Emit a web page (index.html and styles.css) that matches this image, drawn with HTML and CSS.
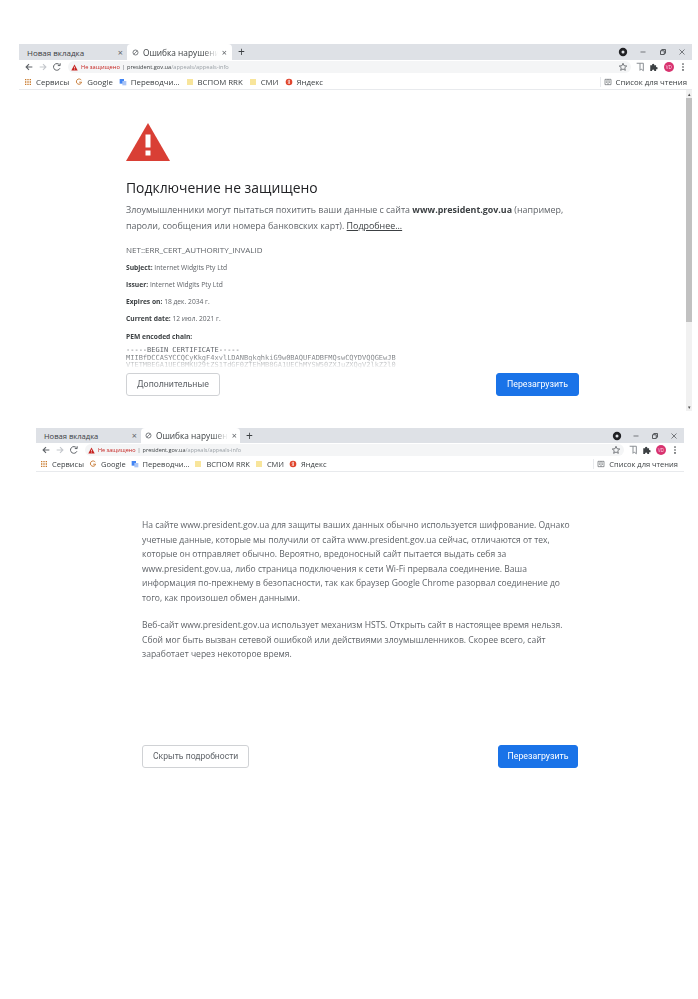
FILE: index.html
```html
<!DOCTYPE html>
<html lang="ru">

<head>
	<meta charset="utf-8">
	<title>Ошибка нарушения конфиденциальности</title>
	<link rel="stylesheet" href="styles.css">
</head>

<body>
	<svg class="defs" width="0" height="0">
		<symbol id="i-back" viewBox="0 0 12 12"><path d="M10 6H2.500M6 2.500 2.500 6 6 9.500" fill="none" stroke="currentColor" stroke-width="1.300"/></symbol>
		<symbol id="i-forward" viewBox="0 0 12 12"><path d="M2 6h7.500M6 2.500 9.500 6 6 9.500" fill="none" stroke="currentColor" stroke-width="1.300"/></symbol>
		<symbol id="i-reload" viewBox="0 0 12 12"><path d="M9.500 7.500A4 4 0 1 1 9 3.500M9.800 1.500v2.800H7" fill="none" stroke="currentColor" stroke-width="1.200"/></symbol>
		<symbol id="i-warn" viewBox="0 0 12 12"><path d="M6 1 11.500 11H.5z" fill="#c5221f"/><path d="M5.400 4.500h1.200v3.200H5.400zM5.400 8.400h1.200v1.200H5.400z" fill="#fff"/></symbol>
		<symbol id="i-globe" viewBox="0 0 12 12"><circle cx="6" cy="6" r="4.300" fill="none" stroke="#5f6368" stroke-width="1.400"/><path d="M3 9 9 3" stroke="#5f6368" stroke-width="1.200"/></symbol>
		<symbol id="i-star" viewBox="0 0 12 12"><path d="m6 1.500 1.300 3 3.200.3-2.400 2.100.7 3.100L6 8.400l-2.800 1.600.7-3.100L1.500 4.800l3.200-.3z" fill="none" stroke="#5f6368" stroke-width="1"/></symbol>
		<symbol id="i-save" viewBox="0 0 12 12"><path d="M2 1.500h8v9L7.500 8.500 6 10V1.500" fill="none" stroke="#80868b" stroke-width="1.100"/></symbol>
		<symbol id="i-puzzle" viewBox="0 0 12 12"><path d="M1.500 4h2.300a1.300 1.300 0 1 1 2.400 0h2.300v2.200a1.300 1.300 0 1 1 0 2.400v2.200H6.200a1.300 1.300 0 1 0-2.400 0H1.500z" fill="#3c4043"/></symbol>
		<symbol id="i-dots" viewBox="0 0 12 12"><circle cx="6" cy="2.500" r="1" fill="#3c4043"/><circle cx="6" cy="6" r="1" fill="#3c4043"/><circle cx="6" cy="9.500" r="1" fill="#3c4043"/></symbol>
		<symbol id="i-apps" viewBox="0 0 12 12"><path d="M1.500 1.500h2v2h-2zM5 1.500h2v2H5zM8.500 1.500h2v2h-2zM1.500 5h2v2h-2zM5 5h2v2H5zM8.500 5h2v2h-2zM1.500 8.500h2v2h-2zM5 8.500h2v2H5zM8.500 8.500h2v2h-2z" fill="#c8792b"/></symbol>
		<symbol id="i-google" viewBox="0 0 12 12"><path d="M9.500 3.300A4 4 0 1 0 10 6.300H6.300" fill="none" stroke="#c9803f" stroke-width="1.500"/></symbol>
		<symbol id="i-translate" viewBox="0 0 12 12"><path d="M1 1.500h6.500v7H1z" fill="#4285f4"/><path d="M5 4.500h6v6.500H5z" fill="#a9c4f5"/></symbol>
		<symbol id="i-folder" viewBox="0 0 12 12"><path d="M1.500 1.500h9v9h-9z" fill="#f8e59b"/></symbol>
		<symbol id="i-yandex" viewBox="0 0 12 12"><circle cx="6" cy="6" r="5" fill="#e0442c"/><path d="M6.700 3v6M6.700 6.300H5.800L4.600 9M6.700 3.200H5.900C4 3.200 4 6 5.800 6.200" fill="none" stroke="#fff" stroke-width=".9"/></symbol>
		<symbol id="i-list" viewBox="0 0 12 12"><path d="M1.500 2h9v8h-9zM6 2v8M3 4.500h1.500M3 6.500h1.500M7.500 4.500H9M7.500 6.500H9" fill="none" stroke="#5f6368" stroke-width="1"/></symbol>
		<symbol id="i-account" viewBox="0 0 12 12"><circle cx="6" cy="6" r="5" fill="#202124"/><circle cx="6" cy="6" r="1.800" fill="#dee1e6"/></symbol>
		<symbol id="i-min" viewBox="0 0 12 12"><path d="M3 6h6" stroke="#5f6368" stroke-width="1"/></symbol>
		<symbol id="i-max" viewBox="0 0 12 12"><path d="M3 4.500h4.500V9H3zM4.500 4.500V3H9v4.500H7.500" fill="none" stroke="#3c4043" stroke-width="1"/></symbol>
		<symbol id="i-close" viewBox="0 0 12 12"><path d="m3 3 6 6M9 3 3 9" stroke="#5f6368" stroke-width="1"/></symbol>
		<symbol id="i-triangle" viewBox="0 0 44 38"><path d="M22 0 44 38H0z" fill="#d93f35"/><path d="M19.500 11.500h5v13h-5zM19.500 27.500h5v5h-5z" fill="#fff"/></symbol>
	</svg>

	<section class="window window-first">
		<div class="tabstrip">
			<div class="tab">
				<span class="tab-title">Новая вкладка</span>
				<span class="tab-x">×</span>
			</div>
			<div class="tab tab-active">
				<svg class="ico"><use href="#i-globe"/></svg>
				<span class="tab-title">Ошибка нарушения</span>
				<span class="tab-x">×</span>
			</div>
			<span class="tab-plus">+</span>
			<div class="controls">
				<svg class="ico account"><use href="#i-account"/></svg>
				<svg class="ico"><use href="#i-min"/></svg>
				<svg class="ico"><use href="#i-max"/></svg>
				<svg class="ico"><use href="#i-close"/></svg>
			</div>
		</div>
		<div class="toolbar">
			<svg class="ico nav"><use href="#i-back"/></svg>
			<svg class="ico nav nav-off"><use href="#i-forward"/></svg>
			<svg class="ico nav"><use href="#i-reload"/></svg>
			<div class="omnibox">
				<svg class="ico warn"><use href="#i-warn"/></svg>
				<span class="insecure">Не защищено</span>
				<span class="pipe">|</span>
				<span class="host">president.gov.ua</span><span class="path">/appeals/appeals-info</span>
				<svg class="ico star"><use href="#i-star"/></svg>
			</div>
			<div class="tools">
				<svg class="ico"><use href="#i-save"/></svg>
				<svg class="ico"><use href="#i-puzzle"/></svg>
				<span class="avatar">VD</span>
				<svg class="ico"><use href="#i-dots"/></svg>
			</div>
		</div>
		<div class="bookmarks">
			<span class="mark"><svg class="ico"><use href="#i-apps"/></svg>Сервисы</span>
			<span class="mark"><svg class="ico"><use href="#i-google"/></svg>Google</span>
			<span class="mark"><svg class="ico"><use href="#i-translate"/></svg>Переводчи...</span>
			<span class="mark"><svg class="ico"><use href="#i-folder"/></svg>ВСПОМ RRK</span>
			<span class="mark"><svg class="ico"><use href="#i-folder"/></svg>СМИ</span>
			<span class="mark"><svg class="ico"><use href="#i-yandex"/></svg>Яндекс</span>
			<span class="mark mark-list"><svg class="ico"><use href="#i-list"/></svg>Список для чтения</span>
		</div>
		<div class="viewport">
			<main class="page page-first">
				<svg class="triangle"><use href="#i-triangle"/></svg>
				<h1>Подключение не защищено</h1>
				<p class="lead">Злоумышленники могут пытаться похитить ваши данные с сайта <b>www.president.gov.ua</b> (например, пароли, сообщения или номера банковских карт). <u>Подробнее...</u></p>
				<p class="code">NET::ERR_CERT_AUTHORITY_INVALID</p>
				<p class="fact"><b>Subject:</b> Internet Widgits Pty Ltd</p>
				<p class="fact"><b>Issuer:</b> Internet Widgits Pty Ltd</p>
				<p class="fact"><b>Expires on:</b> 18 дек. 2034 г.</p>
				<p class="fact"><b>Current date:</b> 12 июл. 2021 г.</p>
				<p class="fact fact-pem"><b>PEM encoded chain:</b></p>
				<pre class="cert">-----BEGIN CERTIFICATE-----
MIIBfDCCASYCCQCyKkgF4xvlLDANBgkqhkiG9w0BAQUFADBFMQswCQYDVQQGEwJB
VTETMBEGA1UECBMKU29tZS1TdGF0ZTEhMB8GA1UEChMYSW50ZXJuZXQgV2lkZ2l0</pre>
				<div class="actions">
					<span class="btn btn-plain">Дополнительные</span>
					<span class="btn btn-blue">Перезагрузить</span>
				</div>
			</main>
			<div class="scrollbar">
				<span class="arrow">▴</span>
				<span class="thumb"></span>
				<span class="arrow arrow-end">▾</span>
			</div>
		</div>
	</section>

	<section class="window window-second">
		<div class="tabstrip">
			<div class="tab">
				<span class="tab-title">Новая вкладка</span>
				<span class="tab-x">×</span>
			</div>
			<div class="tab tab-active">
				<svg class="ico"><use href="#i-globe"/></svg>
				<span class="tab-title">Ошибка нарушения</span>
				<span class="tab-x">×</span>
			</div>
			<span class="tab-plus">+</span>
			<div class="controls">
				<svg class="ico account"><use href="#i-account"/></svg>
				<svg class="ico"><use href="#i-min"/></svg>
				<svg class="ico"><use href="#i-max"/></svg>
				<svg class="ico"><use href="#i-close"/></svg>
			</div>
		</div>
		<div class="toolbar">
			<svg class="ico nav"><use href="#i-back"/></svg>
			<svg class="ico nav nav-off"><use href="#i-forward"/></svg>
			<svg class="ico nav"><use href="#i-reload"/></svg>
			<div class="omnibox">
				<svg class="ico warn"><use href="#i-warn"/></svg>
				<span class="insecure">Не защищено</span>
				<span class="pipe">|</span>
				<span class="host">president.gov.ua</span><span class="path">/appeals/appeals-info</span>
				<svg class="ico star"><use href="#i-star"/></svg>
			</div>
			<div class="tools">
				<svg class="ico"><use href="#i-save"/></svg>
				<svg class="ico"><use href="#i-puzzle"/></svg>
				<span class="avatar">VD</span>
				<svg class="ico"><use href="#i-dots"/></svg>
			</div>
		</div>
		<div class="bookmarks">
			<span class="mark"><svg class="ico"><use href="#i-apps"/></svg>Сервисы</span>
			<span class="mark"><svg class="ico"><use href="#i-google"/></svg>Google</span>
			<span class="mark"><svg class="ico"><use href="#i-translate"/></svg>Переводчи...</span>
			<span class="mark"><svg class="ico"><use href="#i-folder"/></svg>ВСПОМ RRK</span>
			<span class="mark"><svg class="ico"><use href="#i-folder"/></svg>СМИ</span>
			<span class="mark"><svg class="ico"><use href="#i-yandex"/></svg>Яндекс</span>
			<span class="mark mark-list"><svg class="ico"><use href="#i-list"/></svg>Список для чтения</span>
		</div>
		<main class="page page-second">
			<p class="detail">На сайте www.president.gov.ua для защиты ваших данных обычно используется шифрование. Однако учетные данные, которые мы получили от сайта www.president.gov.ua сейчас, отличаются от тех, которые он отправляет обычно. Вероятно, вредоносный сайт пытается выдать себя за www.president.gov.ua, либо страница подключения к сети Wi-Fi прервала соединение. Ваша информация по-прежнему в безопасности, так как браузер Google Chrome разорвал соединение до того, как произошел обмен данными.</p>
			<p class="detail">Веб-сайт www.president.gov.ua использует механизм HSTS. Открыть сайт в настоящее время нельзя. Сбой мог быть вызван сетевой ошибкой или действиями злоумышленников. Скорее всего, сайт заработает через некоторое время.</p>
			<div class="actions">
				<span class="btn btn-plain">Скрыть подробности</span>
				<span class="btn btn-blue">Перезагрузить</span>
			</div>
		</main>
	</section>
</body>

</html>
```

FILE: styles.css
```css
body {
	margin: 0;
	padding-top: 44px;
	background-color: white;
	font-family: "Open Sans", sans-serif;
	color: #5f6368;
}

.defs {
	display: block;
	height: 0;
}

.ico {
	display: block;
	width: 10px;
	height: 10px;
	flex: none;
}

/* Chrome window */

.window {
	filter: blur(0.4px);
}

.window-first {
	width: 673px;
	margin-left: 19px;
}

.window-second {
	width: 648px;
	margin-top: 17px;
	margin-left: 36px;
}

.tabstrip {
	display: flex;
	align-items: center;
	height: 16px;
	background-color: #dee1e6;
}

.window-second .tabstrip {
	height: 15px;
}

.tab {
	display: flex;
	align-items: center;
	gap: 4px;
	box-sizing: border-box;
	width: 107px;
	height: 100%;
	padding: 0 3px 0 8px;
	font-size: 8px;
	color: #3c4043;
}

.window-second .tab {
	width: 104px;
	font-size: 7.600px;
}

.tab-active {
	width: 105px;
	margin-left: 1px;
	padding: 0 5px;
	background-color: white;
	border-radius: 4px 4px 0 0;
}

.window-second .tab-active {
	width: 99px;
	padding: 0 3px 0 4px;
}

.tab-active .ico {
	width: 7px;
	height: 7px;
}

.tab-active .tab-title {
	overflow: hidden;
	white-space: nowrap;
	font-size: 8.300px;
	-webkit-mask-image: linear-gradient(to right, black 80%, transparent);
	mask-image: linear-gradient(to right, black 80%, transparent);
}

.tab-title {
	flex: 1;
	min-width: 0;
}

.tab-x {
	font-size: 9px;
	color: #5f6368;
}

.tab-plus {
	margin-left: 6px;
	font-size: 12px;
	line-height: 1;
	color: #3c4043;
}

.controls {
	display: flex;
	align-items: center;
	gap: 9.500px;
	margin-left: auto;
	padding-right: 5px;
}

.window-second .controls {
	gap: 9px;
}

.account {
	margin-right: 1px;
}

.window-second .account {
	margin-right: 0;
}

.toolbar {
	display: flex;
	align-items: center;
	gap: 4px;
	height: 14px;
	padding-left: 5px;
	background-color: white;
}

.nav {
	color: #5f6368;
}

.nav-off {
	color: #c4c7cc;
}

.omnibox {
	display: flex;
	align-items: center;
	flex: 1;
	height: 12px;
	margin-left: 2px;
	padding: 0 3px;
	border-radius: 6px;
	background-color: #f4f5f6;
	font-size: 5.700px;
	white-space: nowrap;
}

.window-second .omnibox {
	font-size: 5.500px;
}

.warn {
	width: 7px;
	height: 7px;
	margin-right: 3px;
}

.insecure {
	color: #c5221f;
}

.pipe {
	margin: 0 2px;
}

.host {
	color: #3c4043;
}

.path {
	color: #9aa0a6;
}

.star {
	margin-left: auto;
}

.tools {
	display: flex;
	align-items: center;
	gap: 4.300px;
	padding-right: 4px;
}

.window-second .tools {
	gap: 4px;
}

.avatar {
	width: 10px;
	height: 10px;
	border-radius: 50%;
	background-color: #d8336f;
	color: #fde;
	font-size: 4.500px;
	line-height: 10px;
	text-align: center;
}

.bookmarks {
	display: flex;
	align-items: center;
	gap: 6px;
	height: 15px;
	padding-left: 5px;
	border-bottom: 1px solid #e8eaed;
	background-color: white;
}

.window-second .bookmarks {
	gap: 5px;
	height: 14px;
	padding-left: 4px;
}

.mark {
	display: flex;
	align-items: center;
	gap: 4px;
	font-size: 7.800px;
	color: #3c4043;
	white-space: nowrap;
}

.window-second .mark {
	font-size: 7.500px;
}

.mark .ico {
	width: 8px;
	height: 8px;
}

.mark-list {
	margin-left: auto;
	padding-right: 5px;
	padding-left: 3px;
	border-left: 1px solid #e8eaed;
}

.window-second .mark-list {
	padding-right: 6px;
}

/* Interstitial */

.viewport {
	display: flex;
	height: 321px;
}

.page {
	display: flex;
	flex-direction: column;
	box-sizing: border-box;
}

.page-first {
	flex: 1;
	padding: 33px 107px 0;
}

.page-second {
	padding: 46px 106px 0;
}

.triangle {
	display: block;
	width: 44px;
	height: 38px;
	flex: none;
}

h1 {
	margin: 17px 0 0;
	font-size: 13.900px;
	font-weight: 400;
	line-height: 20px;
	color: #202124;
}

.lead {
	margin: 4px 0 0;
	font-size: 8.900px;
	line-height: 16px;
}

.lead b {
	color: #3c4043;
}

.lead u {
	color: #3c4043;
}

.code {
	margin: 9px 0 1px;
	font-size: 8px;
	line-height: 14px;
}

.fact {
	margin: 3px 0 0;
	font-size: 6.700px;
	line-height: 14px;
}

.fact-pem {
	margin-top: 4px;
}

.fact b {
	color: #3c4043;
}

.cert {
	margin: 3px 0 0;
	height: 22px;
	overflow: hidden;
	font-family: "DejaVu Sans Mono", monospace;
	font-size: 7px;
	line-height: 7.500px;
	color: #5f6368;
	-webkit-mask-image: linear-gradient(to bottom, black 30%, transparent);
	mask-image: linear-gradient(to bottom, black 30%, transparent);
}

.actions {
	display: flex;
	justify-content: space-between;
	margin-top: 4px;
}

.page-second .actions {
	margin-top: 83px;
}

.btn {
	box-sizing: border-box;
	height: 23px;
	border-radius: 3px;
	font-family: Roboto, sans-serif;
	font-size: 8.800px;
	line-height: 21px;
	text-align: center;
}

.btn-plain {
	border: 1px solid #d0d2d5;
	color: #5f6368;
	padding: 0 10px;
}

.page-second .btn-plain {
	font-size: 8.600px;
}

.btn-blue {
	width: 83px;
	border: 1px solid #1a73e8;
	background-color: #1a73e8;
	color: white;
}

.page-second .btn-blue {
	width: 80px;
}

.detail {
	max-width: 430px;
	margin: 0 0 13px;
	font-size: 8.550px;
	line-height: 14.500px;
}

.detail + .detail {
	margin-bottom: 0;
}

/* Scrollbar */

.scrollbar {
	display: flex;
	flex-direction: column;
	align-items: center;
	width: 6px;
	background-color: #f1f1f1;
	font-size: 5px;
	color: #505050;
}

.arrow {
	height: 8px;
	line-height: 8px;
}

.thumb {
	width: 100%;
	height: 224px;
	background-color: #c1c1c1;
}

.arrow-end {
	margin-top: auto;
}
```
